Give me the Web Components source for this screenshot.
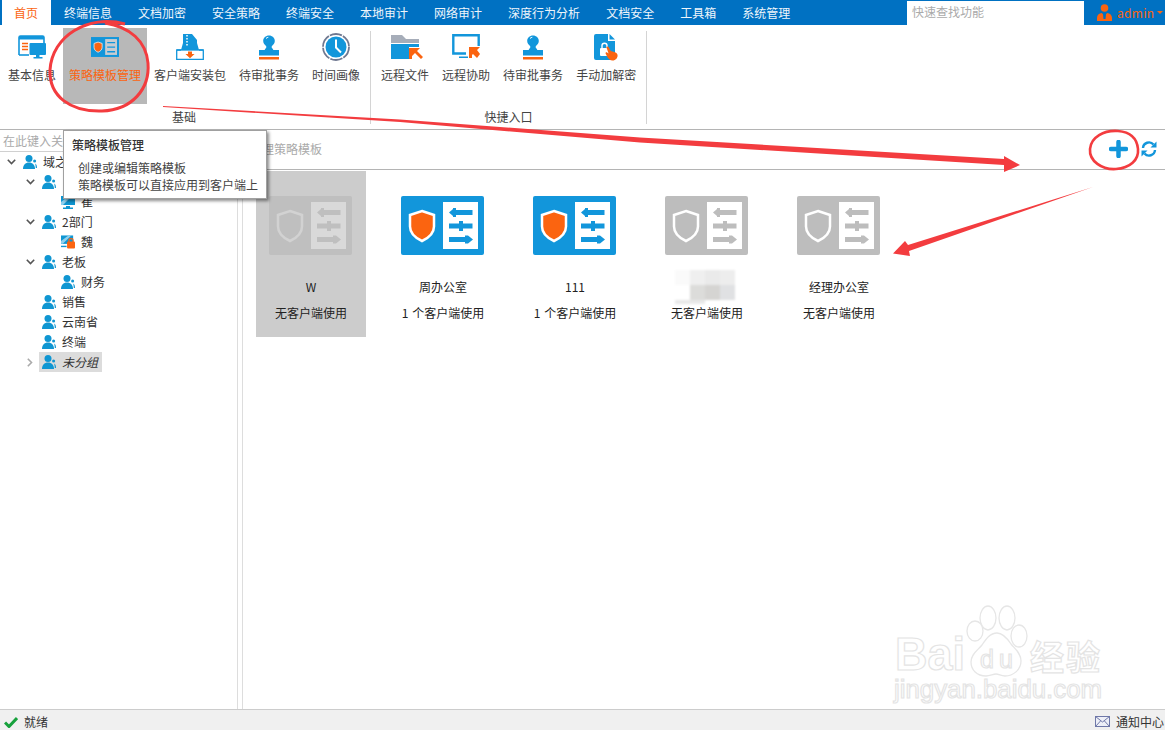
<!DOCTYPE html>
<html lang="zh">
<head>
<meta charset="utf-8">
<title>策略模板管理</title>
<style>
html, body { margin: 0; height: 100%; overflow: hidden; background: #fff; }
body { font: 12px/20px "Noto Sans CJK SC", "Liberation Sans", sans-serif; color: #333; }
</style>
</head>
<body>
<app-shell>
    <app-menubar slot="menubar">
        <menu-tab active>首页</menu-tab>
        <menu-tab>终端信息</menu-tab>
        <menu-tab>文档加密</menu-tab>
        <menu-tab>安全策略</menu-tab>
        <menu-tab>终端安全</menu-tab>
        <menu-tab>本地审计</menu-tab>
        <menu-tab>网络审计</menu-tab>
        <menu-tab>深度行为分析</menu-tab>
        <menu-tab>文档安全</menu-tab>
        <menu-tab>工具箱</menu-tab>
        <menu-tab>系统管理</menu-tab>
    </app-menubar>

    <app-ribbon slot="ribbon">
        <ribbon-group label="基础" style="--pad: 2px">
            <ribbon-item icon="info">基本信息</ribbon-item>
            <ribbon-item icon="policySmall" selected>策略模板管理</ribbon-item>
            <ribbon-item icon="package">客户端安装包</ribbon-item>
            <ribbon-item icon="stamp">待审批事务</ribbon-item>
            <ribbon-item icon="clock">时间画像</ribbon-item>
        </ribbon-group>
        <ribbon-group label="快捷入口">
            <ribbon-item icon="folder">远程文件</ribbon-item>
            <ribbon-item icon="remote">远程协助</ribbon-item>
            <ribbon-item icon="stamp">待审批事务</ribbon-item>
            <ribbon-item icon="doclock">手动加解密</ribbon-item>
        </ribbon-group>
    </app-ribbon>

    <tree-pane slot="side" placeholder="在此键入关">
        <tree-row level="0" state="open" icon="group">域之</tree-row>
        <tree-row level="1" state="open" icon="group"></tree-row>
        <tree-row level="2" icon="pc">崔</tree-row>
        <tree-row level="1" state="open" icon="group">2部门</tree-row>
        <tree-row level="2" icon="pclock">魏</tree-row>
        <tree-row level="1" state="open" icon="group">老板</tree-row>
        <tree-row level="2" icon="group">财务</tree-row>
        <tree-row level="1" icon="group">销售</tree-row>
        <tree-row level="1" icon="group">云南省</tree-row>
        <tree-row level="1" icon="group">终端</tree-row>
        <tree-row level="1" state="closed" icon="group" selected><i>未分组</i></tree-row>
    </tree-pane>

    <policy-pane slot="main" placeholder="管理策略模板">
        <policy-card selected name="W" usage="无客户端使用"></policy-card>
        <policy-card active name="周办公室" usage="1 个客户端使用"></policy-card>
        <policy-card active name="111" usage="1 个客户端使用"></policy-card>
        <policy-card masked usage="无客户端使用"></policy-card>
        <policy-card name="经理办公室" usage="无客户端使用"></policy-card>
    </policy-pane>

    <status-bar slot="status"></status-bar>
</app-shell>
<hint-tooltip title="策略模板管理">
    <div>创建或编辑策略模板</div>
    <div>策略模板可以直接应用到客户端上</div>
</hint-tooltip>
<baidu-mark></baidu-mark>
<red-marks></red-marks>

<script>
(function () {
    const BLUE = "#1296db";
    const ORANGE = "#fb6410";

    // sliders + shield artwork, drawn on an 83x59 box
    function policyArt(bg, panel, bars, ring, fill) {
        return `<svg viewBox="0 0 83 59" width="100%" height="100%" preserveAspectRatio="none">
            <rect width="83" height="59" rx="2" fill="${bg}"/>
            <rect x="42" y="6" width="35" height="47" fill="${panel}"/>
            <path d="M21 15l12 4v11.500c0 7.500-5.500 11.500-12 14.500c-6.500-3-12-7-12-14.500V19z" fill="${fill}" stroke="${ring}" stroke-width="2.500"/>
            <g fill="${bars}">
                <rect x="51" y="14" width="20.500" height="5"/><path d="M48 16.500l4-3.500v7z"/><rect x="52" y="12" width="3" height="9"/>
                <rect x="48" y="27.500" width="23.500" height="5"/><rect x="58" y="25" width="4" height="10"/>
                <rect x="48" y="41" width="19" height="5"/><path d="M72 43.500l-5-4v8z"/><rect x="64" y="39.500" width="3" height="8"/>
            </g>
        </svg>`;
    }

    const ICONS = {
        info: `<svg width="28" height="25" viewBox="0 0 28 25" style="margin-top:1px">
            <path d="M1 20V2.500C1 1.500 1.500 1 2.500 1h22c1 0 1.500.5 1.500 1.500V8" fill="none" stroke="${BLUE}" stroke-width="1.600"/>
            <rect x="1" y="1" width="25" height="3.500" fill="${BLUE}"/>
            <path d="M1 20h10" stroke="${BLUE}" stroke-width="1.600"/>
            <path d="M4 8.500h6M4 11.500h6M4 14.500h6" stroke="${ORANGE}" stroke-width="1.500"/>
            <rect x="11.500" y="8" width="16.500" height="12" rx="1" fill="${BLUE}"/>
            <path d="M18 20h3.500v2H18zM15.500 22h9v1.500h-9z" fill="${BLUE}"/>
        </svg>`,
        policySmall: `<svg width="28" height="20" viewBox="0 0 83 59" style="margin-top:3px">
            <rect width="83" height="59" fill="${BLUE}"/>
            <rect x="42" y="6" width="35" height="47" fill="#c9ccd0"/>
            <path d="M21 15l12 4v11.500c0 7.500-5.500 11.500-12 14.500c-6.500-3-12-7-12-14.500V19z" fill="${ORANGE}" stroke="#e8e8e8" stroke-width="2.500"/>
            <path d="M48 16.500h23.500M48 30h23.500M48 43.500h23.500" stroke="${BLUE}" stroke-width="4"/>
        </svg>`,
        package: `<svg width="28" height="26" viewBox="0 0 28 26">
            <path d="M7 0h9l5 6v3l2 7H5l2-7z" fill="${BLUE}"/>
            <path d="M11 1v12" stroke="#fff" stroke-width="1.500" stroke-dasharray="1.500 1.500"/>
            <path d="M5 16H.7v9.300h26.600V16H23" fill="#fff" stroke="${BLUE}" stroke-width="1.300"/>
            <path d="M1 16h26" stroke="${BLUE}" stroke-width="1.300"/>
            <path d="M12 17.500h4v2.500h2.500L14 24.200 9.500 20H12z" fill="${ORANGE}"/>
        </svg>`,
        stamp: `<svg width="20" height="25" viewBox="0 0 20 25" style="margin-top:1px">
            <path d="M10 0.500c3.300 0 5.800 2.400 5.800 5.500c0 2.200-1.300 3.600-2.600 4.800c-.7.700-.7 1.700-.2 2.200c.6.700 1.200 1 1.200 2H5.800c0-1 .6-1.300 1.200-2c.5-.5.500-1.500-.2-2.200C5.500 9.600 4.200 8.200 4.200 6c0-3.100 2.500-5.500 5.800-5.500z" fill="${BLUE}"/>
            <path d="M7 3.500c.7-.8 1.500-1.100 2.300-1.200" stroke="#fff" stroke-width="1" fill="none"/>
            <rect y="15" width="20" height="5.500" fill="${BLUE}"/>
            <rect y="22" width="20" height="2.500" fill="${ORANGE}"/>
        </svg>`,
        clock: `<svg width="28" height="28" viewBox="0 0 28 28" style="margin-top:-1px">
            <circle cx="14" cy="14" r="13" fill="none" stroke="#6f7890" stroke-width="1.800" stroke-dasharray="12.500 1.120"/>
            <circle cx="14" cy="14" r="10.500" fill="${BLUE}"/>
            <path d="M14 6.500V14.500L19 19.500" fill="none" stroke="#fff" stroke-width="2"/>
        </svg>`,
        folder: `<svg width="33" height="25" viewBox="0 0 33 25" style="margin-left:5px">
            <path d="M0 1h11l4 4h13v4H0z" fill="#a6adb9"/>
            <rect x="0" y="10" width="28" height="15" fill="${BLUE}"/>
            <rect x="18" y="13" width="15" height="12" fill="#fff"/>
            <path d="M18 14h11l-3 3 6 6-2 2-6-6-3 3v3h-3z" fill="${ORANGE}"/>
        </svg>`,
        remote: `<svg width="28" height="25" viewBox="0 0 28 25">
            <path d="M14 19.500H1.300V1.300h25.400V12" fill="none" stroke="${BLUE}" stroke-width="2.400"/>
            <path d="M7 24h9v-1.500H7z" fill="${BLUE}"/>
            <path d="M17 13h11l-3 3 3 4-3 4-4-4-1 1v3h-3z" fill="${ORANGE}"/>
        </svg>`,
        doclock: `<svg width="24" height="27" viewBox="0 0 24 27">
            <path d="M0 2Q0 0 2 0H14V7h7V26H2Q0 26 0 24z" fill="${BLUE}"/>
            <path d="M15.500 0L21 5.500h-5.500z" fill="${BLUE}"/>
            <rect x="6" y="14" width="9" height="8" rx="1" fill="#fff"/>
            <path d="M8 14v-2.500c0-3 5-3 5 0V14" fill="none" stroke="#fff" stroke-width="1.400"/>
            <path d="M12.300 13c.8-.9 1.900-.6 2.400.3l2 3.700 3.500 1c2 .6 3.400 1.800 3.400 3.500 0 2.500-2 5-5 5-2.500 0-4-1.500-5-3l-2-4c-.3-.9.800-1.600 1.500-1l1.500 1z" fill="${ORANGE}"/>
        </svg>`,
        group: `<svg width="14" height="14" viewBox="0 0 14 14">
            <circle cx="6" cy="3.600" r="3.500" fill="#0f96d2"/>
            <path d="M0 14c0-4 2.400-6.500 6-6.500s6 2.500 6 6.500z" fill="#0f96d2"/>
            <circle cx="11.600" cy="6" r="1.500" fill="#0f96d2"/>
            <path d="M12.200 8.500c1.200.6 1.800 2.200 1.800 4.500h-1.200c-.1-1.700-.4-3.300-.6-4.500z" fill="#0f96d2"/>
        </svg>`,
        pc: `<svg width="14" height="13" viewBox="0 0 14 13">
            <rect width="14" height="9" fill="#0f96d2"/>
            <path d="M0 6L8 0h3L2 9H0z" fill="#8fd0ee"/>
            <path d="M5 10h4v1.500h3V13H2v-1.500h3z" fill="#0f96d2"/>
        </svg>`,
        pclock: `<svg width="15" height="14" viewBox="0 0 15 14">
            <rect width="13" height="9" fill="#0f96d2"/>
            <path d="M0 6L8 0h3L2 9H0z" fill="#8fd0ee"/>
            <path d="M0 11h6v1.500H0z" fill="#0f96d2"/>
            <rect x="6.500" y="6.500" width="8.500" height="7.500" rx="1" fill="${ORANGE}"/>
            <path d="M8.500 7V5.500c0-2.700 4.500-2.700 4.500 0V7" fill="none" stroke="${ORANGE}" stroke-width="1.300"/>
        </svg>`
    };

    function define(tag, html, init) {
        const template = document.createElement("template");
        template.innerHTML = html;
        customElements.define(tag, class extends HTMLElement {
            constructor() {
                super();
                this.attachShadow({ mode: "open" });
                this.shadowRoot.appendChild(template.content.cloneNode(true));
            }
            connectedCallback() {
                if (init) init(this, this.shadowRoot);
            }
        });
    }

    define("app-shell", `
    <style>
    :host { display: flex; flex-direction: column; height: 730px; width: 1165px; overflow: hidden; }
    .body { display: flex; flex: 1; min-height: 0; }
    </style>
    <slot name="menubar"></slot>
    <slot name="ribbon"></slot>
    <div class="body">
        <slot name="side"></slot>
        <slot name="main"></slot>
    </div>
    <slot name="status"></slot>
    `);

    define("app-menubar", `
    <style>
    :host { display: flex; height: 25px; background: #0071c2; padding-left: 2px; color: #eef5fb; }
    .search { box-sizing: border-box; width: 177px; height: 24px; margin: 1px 0 0 auto; padding-left: 5px;
              background: #fff; color: #aaa; line-height: 22px; }
    .user { box-sizing: border-box; width: 81px; padding-left: 13px; display: flex; align-items: center; color: ${ORANGE}; letter-spacing: .3px; }
    .user svg { margin-right: 5px; }
    .caret { width: 0; height: 0; border: 3px solid transparent; border-top-color: ${ORANGE}; border-bottom: 0; margin-left: 3px; }
    </style>
    <slot></slot>
    <div class="search">快速查找功能</div>
    <div class="user">
        <svg width="15" height="17" viewBox="0 0 15 17">
            <circle cx="7.500" cy="4" r="3.800" fill="${ORANGE}"/>
            <path d="M0 17v-3c0-3 2-4.500 4.800-5l1.200 1.300L6.500 15h2L9 10.300 10.200 9c2.800.5 4.800 2 4.800 5v3z" fill="${ORANGE}"/>
        </svg>
        <span>admin</span><span class="caret"></span>
    </div>
    `);

    define("menu-tab", `
    <style>
    :host { display: block; padding: 0 13px; line-height: 26px; white-space: nowrap; }
    :host([active]) { background: #fff; color: ${ORANGE}; padding-left: 12px; }
    </style>
    <slot></slot>
    `);

    define("app-ribbon", `
    <style>
    :host { box-sizing: border-box; display: flex; height: 105px; padding-top: 3px; border-bottom: 1px solid #b4b4b4; background: #fff; }
    </style>
    <slot></slot>
    `);

    define("ribbon-group", `
    <style>
    :host { display: flex; flex-direction: column; position: relative; padding: 0 5px 0 var(--pad, 4px); color: #444; }
    .items { display: flex; gap: 1px; }
    .label { margin-top: 4px; line-height: 18px; text-align: center; }
    .sep { position: absolute; right: 0; top: 3px; bottom: 5px; width: 1px; background: #d4d4d4; }
    </style>
    <div class="items"><slot></slot></div>
    <div class="label"></div>
    <div class="sep"></div>
    `, (el, root) => {
        root.querySelector(".label").textContent = el.getAttribute("label");
    });

    define("ribbon-item", `
    <style>
    :host { display: flex; flex-direction: column; align-items: center; height: 76px; padding: 6px 6px 0; white-space: nowrap; box-sizing: border-box; }
    :host([selected]) { background: #b8b8b8; color: ${ORANGE}; }
    .icon { height: 26px; margin-bottom: 5px; display: flex; justify-content: center; align-items: flex-start; }
    svg { display: block; }
    </style>
    <div class="icon"></div>
    <slot></slot>
    `, (el, root) => {
        root.querySelector(".icon").innerHTML = ICONS[el.getAttribute("icon")];
    });

    define("tree-pane", `
    <style>
    :host { box-sizing: border-box; display: block; width: 238px; border-right: 1px solid #ddd; }
    .search { box-sizing: border-box; height: 22px; padding-left: 3px; line-height: 21px; color: #aaa; border-bottom: 1px solid #d0d0d0; white-space: nowrap; }
    </style>
    <div class="search"></div>
    <slot></slot>
    `, (el, root) => {
        root.querySelector(".search").textContent = el.getAttribute("placeholder");
    });

    define("tree-row", `
    <style>
    :host { display: flex; align-items: center; height: 20px; padding-left: calc(var(--level) * 19px + 4px); white-space: nowrap; color: #333; }
    .chev { width: 14px; height: 20px; margin-right: 2px; display: flex; align-items: center; justify-content: center; }
    .body { display: flex; align-items: center; gap: 6px; height: 20px; padding: 0 4px 0 3px; }
    :host([selected]) .body { background: #dcdcdc; }
    .ico { width: 14px; display: flex; justify-content: center; }
    svg { display: block; }
    ::slotted(i) { font-style: italic; }
    </style>
    <span class="chev"></span>
    <span class="body"><span class="ico"></span><span><slot></slot></span></span>
    `, (el, root) => {
        el.style.setProperty("--level", el.getAttribute("level"));
        root.querySelector(".ico").innerHTML = ICONS[el.getAttribute("icon")];
        const state = el.getAttribute("state");
        if (state === "open")
            root.querySelector(".chev").innerHTML = `<svg width="9" height="6" viewBox="0 0 9 6"><path d="M.8 .8L4.500 4.500 8.200 .8" fill="none" stroke="#555" stroke-width="1.600"/></svg>`;
        if (state === "closed")
            root.querySelector(".chev").innerHTML = `<svg width="6" height="9" viewBox="0 0 6 9"><path d="M.8 .8L4.500 4.500 .8 8.200" fill="none" stroke="#aaa" stroke-width="1.600"/></svg>`;
    });

    define("policy-pane", `
    <style>
    :host { flex: 1; min-width: 0; display: block; margin-left: 4px; border-left: 1px solid #ddd; }
    .tools { box-sizing: border-box; height: 40px; display: flex; align-items: center; padding: 0 8px 1px 7px; border-bottom: 1px solid #b4b4b4; color: #aaa; }
    .buttons { margin-left: auto; display: flex; align-items: center; gap: 13px; }
    .cards { display: flex; gap: 22px; padding: 1px 0 0 13px; }
    svg { display: block; }
    </style>
    <div class="tools">
        <span class="hint"></span>
        <span class="buttons">
            <svg width="19" height="18" viewBox="0 0 19 18"><path d="M9.500 2v14M2 9h15" stroke="${BLUE}" stroke-width="4.500" stroke-linecap="round"/></svg>
            <svg width="16" height="16" viewBox="0 0 16 16">
                <path d="M2 7a6 6 0 0 1 10.500-3.500" fill="none" stroke="${BLUE}" stroke-width="2.400"/><path d="M15.500 .5v6h-6z" fill="${BLUE}"/>
                <path d="M14 9a6 6 0 0 1-10.500 3.500" fill="none" stroke="${BLUE}" stroke-width="2.400"/><path d="M.5 15.500v-6h6z" fill="${BLUE}"/>
            </svg>
        </span>
    </div>
    <div class="cards"><slot></slot></div>
    `, (el, root) => {
        root.querySelector(".hint").textContent = el.getAttribute("placeholder");
    });

    define("policy-card", `
    <style>
    :host { box-sizing: border-box; position: relative; display: flex; flex-direction: column; align-items: center; width: 110px; height: 166px; padding-top: 25px; color: #222; text-align: center; white-space: nowrap; }
    :host([selected]) { background: #ccc; }
    .art { width: 83px; height: 59px; margin: 0 1px 22px 0; }
    svg { display: block; }
    .name { height: 20px; margin-bottom: 6px; }
    .usage { word-spacing: 1px; }
    .mosaic { position: absolute; left: 23px; top: 99px; display: grid; grid-template-columns: repeat(4, 15px); grid-template-rows: 15px 15px 4px; filter: blur(.8px); }
    </style>
    <div class="art"></div>
    <div class="name"></div>
    <div class="usage"></div>
    `, (el, root) => {
        const art = root.querySelector(".art");
        if (el.hasAttribute("active"))
            art.innerHTML = policyArt(BLUE, "#fff", BLUE, "#fff", ORANGE);
        else if (el.hasAttribute("selected"))
            art.innerHTML = policyArt("#bfbfbf", "#d9d9d9", "#bfbfbf", "#d2d2d2", "#bfbfbf");
        else
            art.innerHTML = policyArt("#bdbdbd", "#fff", "#bdbdbd", "#fff", "#bdbdbd");
        root.querySelector(".name").textContent = el.getAttribute("name") || "";
        root.querySelector(".usage").textContent = el.getAttribute("usage");
        if (el.hasAttribute("masked")) {
            const mosaic = document.createElement("div");
            mosaic.className = "mosaic";
            ["#fafafa", "#efefef", "#eaeaea", "#ededed", "#fff", "#dcdcda", "#d5d4d2", "#e0e1e3", "#e8e8e8", "#e8e8e8"].forEach(c => {
                const cell = document.createElement("div");
                cell.style.background = c;
                mosaic.appendChild(cell);
            });
            root.appendChild(mosaic);
        }
    });

    define("status-bar", `
    <style>
    :host { box-sizing: border-box; display: flex; align-items: center; height: 21px; padding: 3px 1px 0 4px; background: #f0f0f0; border-top: 1px solid #ccc; color: #333; }
    svg { display: block; }
    .ok { margin-right: 6px; }
    .mail { margin: 0 6px 0 auto; }
    </style>
    <svg class="ok" width="14" height="12" viewBox="0 0 14 12"><path d="M1 6.500l4 4L13 2" fill="none" stroke="#17a13c" stroke-width="3"/></svg>
    <span>就绪</span>
    <svg class="mail" width="15" height="11" viewBox="0 0 15 11"><rect x=".5" y=".5" width="14" height="10" fill="#eef0f8" stroke="#6f78a8"/><path d="M.5 .5L7.500 6l7-5.500M.5 10.500l5-5.500M14.500 10.500l-5-5.500" fill="none" stroke="#6f78a8"/></svg>
    <span>通知中心</span>
    `);

    define("hint-tooltip", `
    <style>
    :host { box-sizing: border-box; position: absolute; left: 63px; top: 130px; width: 204px; height: 69px; padding: 5px 8px; background: #fff; border: 1px solid #a0a0a0; box-shadow: 2px 2px 3px rgba(0, 0, 0, .45); color: #444; white-space: nowrap; }
    .title { line-height: 18px; font-weight: 500; color: #333; }
    .text { margin: 5px 0 0 6px; line-height: 17px; }
    </style>
    <div class="title"></div>
    <div class="text"><slot></slot></div>
    `, (el, root) => {
        root.querySelector(".title").textContent = el.getAttribute("title");
        el.removeAttribute("title");
    });

    define("baidu-mark", `
    <style>
    :host { position: absolute; left: 885px; top: 600px; width: 225px; height: 110px; pointer-events: none; }
    svg { display: block; }
    text { fill: #fff; stroke: #e4e4e4; stroke-width: 1.200; font-family: "Liberation Sans", sans-serif; font-weight: bold; }
    .ellipse { fill: #fff; stroke: #e6e6e6; stroke-width: 1.300; }
    </style>
    <svg width="225" height="110" viewBox="0 0 225 110">
        <text x="10" y="70" font-size="46" textLength="70" lengthAdjust="spacingAndGlyphs">Bai</text>
        <ellipse class="ellipse" cx="103" cy="18" rx="8" ry="12"/>
        <ellipse class="ellipse" cx="122" cy="18" rx="8" ry="12"/>
        <ellipse class="ellipse" cx="90" cy="31" rx="8" ry="10"/>
        <ellipse class="ellipse" cx="134" cy="36" rx="8" ry="11"/>
        <path class="ellipse" d="M112 33c6 0 10 5 14 11c4 5 10 9 10 17c0 9-8 15-16 15c-4 0-6-2-9-2s-6 2-10 2c-9 0-15-6-15-14c0-8 7-12 11-17c4-6 8-12 15-12z"/>
        <text x="95" y="68" font-size="25" textLength="33" style="font-weight:normal">du</text>
        <text x="145" y="70" font-size="34" textLength="70" style="font-family:'Noto Sans CJK SC',sans-serif">经验</text>
        <text x="9" y="98" font-size="26" textLength="208" lengthAdjust="spacingAndGlyphs" style="font-weight:normal">jingyan.baidu.com</text>
    </svg>
    `);

    define("red-marks", `
    <style>
    :host { position: absolute; left: 0; top: 0; width: 1165px; height: 730px; pointer-events: none; }
    svg { display: block; }
    </style>
    <svg width="1165" height="730" viewBox="0 0 1165 730" fill="none">
        <path d="M125 24C88 14 52 36 50 70c-1 26 20 42 52 41c30-1 48-22 46-48c-2-22-18-36-43-40" stroke="#f33c3f" stroke-width="3"/>
        <path d="M1118 131c-14-1-27 6-28 18c-1 12 12 21 26 20c14-1 23-9 22-20c-1-11-8-17-20-18" stroke="#f33c3f" stroke-width="2.600"/>
        <path d="M163 106L400 119.500 640 137.500 1004 159V156L1020 165 1004 172V165L640 142.500 400 122 163 107z" fill="#f33c3f"/>
        <path d="M1093 187L908 245 905 241 893 253.500 910 256 909 251z" fill="#f33c3f"/>
    </svg>
    `);
})();
</script>
</body>
</html>
